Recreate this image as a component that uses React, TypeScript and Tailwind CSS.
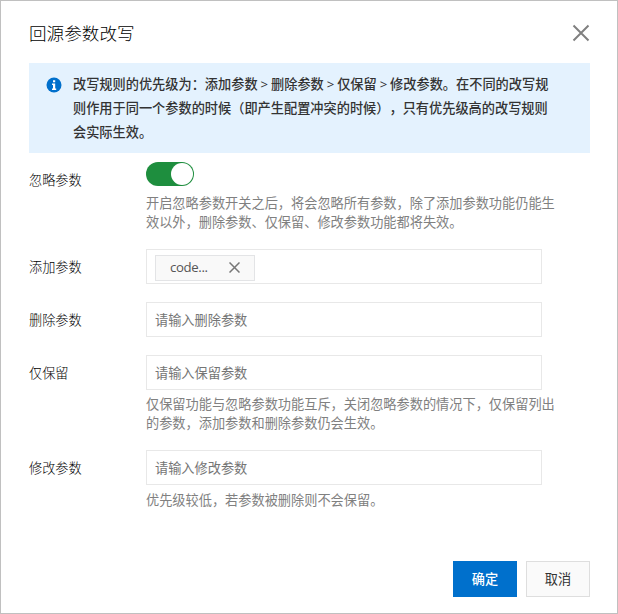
import React from 'react';

function Row({ label, children, className }: { label: string; children: React.ReactNode; className: string }) {
  return (
    <div className={`flex ${className}`}>
      <div className="w-[117px] shrink-0 pt-2 text-[13.2px] font-light leading-5 text-black">{label}</div>
      <div className="min-w-0 flex-1">{children}</div>
    </div>
  );
}

function Field({ placeholder }: { placeholder: string }) {
  return (
    <input
      className="block h-[35px] w-[396px] border border-[#e8e8e8] px-2 pt-px text-[13.2px] text-[#333] outline-none placeholder:text-[#757575]"
      placeholder={placeholder}
    />
  );
}

function Hint({ lines }: { lines: string[] }) {
  return (
    <div className="whitespace-nowrap text-[13.2px] leading-[19px] text-[#808080]">
      {lines.map((l) => (
        <div key={l}>{l}</div>
      ))}
    </div>
  );
}

export default function App() {
  return (
    <div className="h-[614px] w-[618px] overflow-hidden border border-[#c0c0c0] bg-white pl-7 pr-[27px] font-['Open_Sans','Noto_Sans_CJK_SC',sans-serif] [text-spacing-trim:space-all]">
      <div className="flex h-[62px] items-center justify-between pt-0.5">
        <h1 className="text-[17.6px] font-light leading-6 text-black">回源参数改写</h1>
        <svg width="18" height="18" viewBox="0 0 18 18" stroke="#808080" strokeWidth="2" fill="none">
          <path d="M1.5 1.5l15 15M16.5 1.5l-15 15" />
        </svg>
      </div>
      <div className="flex h-[90px] bg-[#e4f2fe] pl-[17px] pt-[9px]">
        <svg className="mt-[5px] shrink-0" width="16" height="16" viewBox="0 0 16 16">
          <circle cx="8" cy="8" r="7.5" fill="#0070cc" />
          <path d="M7 3.2h2.2v2H7zM6 6.5h3.2v5h1V13H6v-1.5h1V8H6z" fill="#fff" />
        </svg>
        <div className="ml-[11px] whitespace-nowrap text-[13.2px] font-medium leading-6 text-[#333]">
          <div className="[word-spacing:-0.5px]">
            改写规则的优先级为：添加参数 &gt; 删除参数 &gt; 仅保留 &gt; 修改参数。在不同的改写规
          </div>
          <div>则作用于同一个参数的时候（即产生配置冲突的时候），只有优先级高的改写规则</div>
          <div>会实际生效。</div>
        </div>
      </div>
      <Row label="忽略参数" className="mt-[9px] h-[87px]">
        <div className="mb-2 flex h-6 w-12 justify-end rounded-full bg-[#1e8e3e] p-px">
          <div className="h-[22px] w-[22px] rounded-full bg-white" />
        </div>
        <Hint lines={['开启忽略参数开关之后，将会忽略所有参数，除了添加参数功能仍能生', '效以外，删除参数、仅保留、修改参数功能都将失效。']} />
      </Row>
      <Row label="添加参数" className="h-[53px]">
        <div className="flex h-[35px] w-[396px] items-center border border-[#e8e8e8] pl-2 pt-0.5">
          <div className="flex h-[26px] w-[100px] items-center border border-[#e3e4e6] bg-[#f9f9f9] pl-[14px] text-[13.2px] text-[#555]">
            <span className="w-[59px] pt-px tracking-[-0.35px]">code...</span>
            <svg width="11" height="11" viewBox="0 0 11 11" stroke="#777" strokeWidth="1.5">
              <path d="M.5.5l10 10M10.5.5l-10 10" />
            </svg>
          </div>
        </div>
      </Row>
      <Row label="删除参数" className="h-[53px]">
        <Field placeholder="请输入删除参数" />
      </Row>
      <Row label="仅保留" className="h-[95px]">
        <Field placeholder="请输入保留参数" />
        <div className="mt-[5px]">
          <Hint lines={['仅保留功能与忽略参数功能互斥，关闭忽略参数的情况下，仅保留列出', '的参数，添加参数和删除参数仍会生效。']} />
        </div>
      </Row>
      <Row label="修改参数" className="h-[111px]">
        <Field placeholder="请输入修改参数" />
        <div className="mt-1.5">
          <Hint lines={['优先级较低，若参数被删除则不会保留。']} />
        </div>
      </Row>
      <div className="flex justify-end gap-[9px] text-[13.2px]">
        <button className="h-9 w-16 bg-[#0070cc] pt-0.5 font-medium text-white">确定</button>
        <button className="h-9 w-16 border border-[#dedede] bg-[#fafafa] pt-0.5 text-[#333]">取消</button>
      </div>
    </div>
  );
}
